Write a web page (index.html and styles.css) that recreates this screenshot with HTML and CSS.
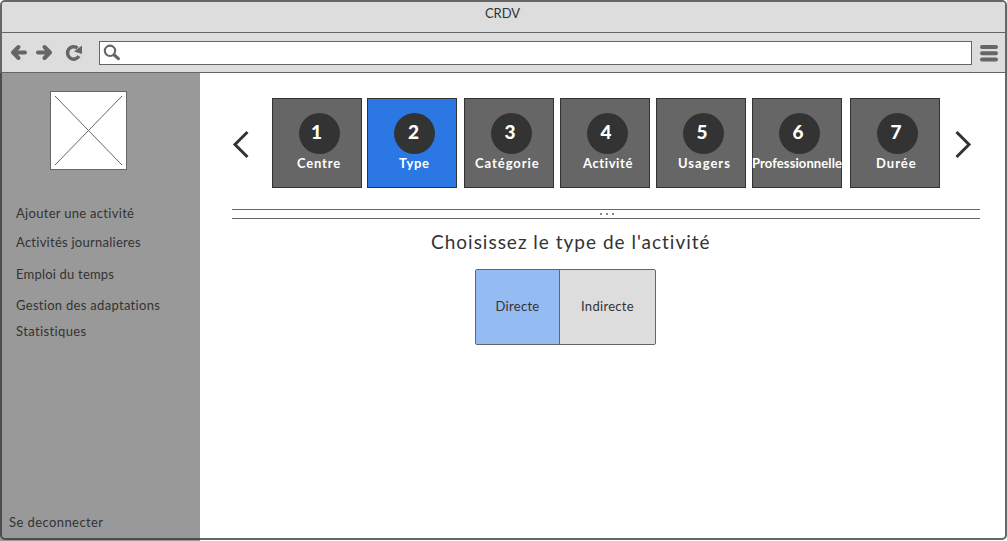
FILE: index.html
```html
<!DOCTYPE html>
<html lang="fr">
<head>
<meta charset="utf-8">
<title>CRDV</title>
<link rel="stylesheet" href="styles.css">
</head>
<body>
<div class="window">
  <header class="titlebar">CRDV</header>
  <div class="toolbar">
    <svg class="nav-icons" width="97" height="39" viewBox="2 33 97 39">
      <g fill="none" stroke="#666" stroke-linecap="round" stroke-linejoin="round" stroke-width="4">
        <path d="M25 52.500H15M18.500 47L13 52.500L18.500 58"/>
        <path d="M38 52.500H48M44.500 47L50 52.500L44.500 58"/>
      </g>
      <path d="M79 56.200A6.200 6.200 0 1 1 77.500 48" fill="none" stroke="#666" stroke-width="3.500"/>
      <path d="M82 45.500V54L74 51.500Z" fill="#666"/>
    </svg>
    <div class="address">
      <svg width="24" height="22" viewBox="100 42 24 22">
        <circle cx="110" cy="50.800" r="5.200" fill="none" stroke="#666" stroke-width="2.100"/>
        <path d="M114.500 55.200L118.400 58.600" stroke="#666" stroke-width="3.200" stroke-linecap="round"/>
      </svg>
    </div>
    <svg class="menu-icon" width="18" height="17" viewBox="0 0 18 17">
      <path d="M2 2H16M2 8.200H16M2 14.400H16" stroke="#666" stroke-width="4" stroke-linecap="round"/>
    </svg>
  </div>
  <div class="body">
    <aside class="sidebar">
      <svg class="picture" width="77" height="79" viewBox="0 0 77 79">
        <rect x=".5" y=".5" width="76" height="78" fill="#fff" stroke="#666"/>
        <path d="M5 5L72 74M72 5L5 74" stroke="#666" stroke-width="1"/>
      </svg>
      <nav class="links">
        <a class="link-add">Ajouter une activité</a>
        <a class="link-daily">Activités journalieres</a>
        <a class="link-schedule">Emploi du temps</a>
        <a class="link-adapt">Gestion des adaptations</a>
        <a class="link-stats">Statistiques</a>
      </nav>
      <a class="logout">Se deconnecter</a>
    </aside>
    <main class="main">
      <div class="stepper">
        <svg class="prev" width="18" height="30" viewBox="0 0 18 30"><path d="M15.500 3L3 15.500L15.500 28" fill="none" stroke="#333" stroke-width="3"/></svg>
        <div class="step s1"><b>1</b><span>Centre</span></div>
        <div class="step s2 active"><b>2</b><span>Type</span></div>
        <div class="step s3"><b>3</b><span>Catégorie</span></div>
        <div class="step s4"><b>4</b><span>Activité</span></div>
        <div class="step s5"><b>5</b><span>Usagers</span></div>
        <div class="step s6"><b>6</b><span>Professionnelle</span></div>
        <div class="step s7"><b>7</b><span>Durée</span></div>
        <svg class="next" width="18" height="30" viewBox="0 0 18 30"><path d="M2.500 3L15 15.500L2.500 28" fill="none" stroke="#333" stroke-width="3"/></svg>
      </div>
      <div class="splitter"><i></i><i></i><i></i></div>
      <h1 class="question">Choisissez le type de l'activité</h1>
      <div class="choices">
        <div class="choice selected">Directe</div>
        <div class="choice">Indirecte</div>
      </div>
    </main>
  </div>
</div>
</body>
</html>
```
FILE: styles.css
```css
* { box-sizing: border-box; }
body {
  margin: 0;
  height: 541px;
  overflow: hidden;
  background: #fff;
  color: #333;
  font: 13px/20px Lato, "Open Sans", sans-serif;
}
.window {
  display: flex;
  flex-direction: column;
  width: 1007px;
  height: 540px;
  border: 2px solid #666;
  border-radius: 5px;
}
.titlebar {
  height: 31px;
  padding: 1px 2px 0 0;
  border-bottom: 1px solid #666;
  border-radius: 3px 3px 0 0;
  background: #ddd;
  text-align: center;
}
.toolbar {
  display: flex;
  height: 40px;
  border-bottom: 1px solid #666;
  background: #ddd;
}
.address {
  width: 873px;
  height: 24px;
  margin-top: 8px;
  border: 1px solid #666;
  background: #fff;
}
.address svg, .nav-icons, .menu-icon { display: block; }
.menu-icon { margin: 12px 0 0 8px; }
.body { display: flex; flex: 1; min-height: 0; }
.sidebar {
  display: flex;
  flex-direction: column;
  width: 200px;
  margin: 0 0 -3px -2px;
  background: rgba(51, 51, 51, .5);
}
.picture { margin: 18px 0 0 50px; flex: none; }
.links { display: flex; flex-direction: column; align-items: flex-start; padding: 33px 0 0 16px; }
.links a { white-space: nowrap; letter-spacing: .3px; }
.links .link-daily { margin-top: 9px; letter-spacing: .26px; }
.links .link-schedule { margin-top: 12px; letter-spacing: .2px; }
.link-adapt { margin-top: 11px; }
.links .link-stats { margin-top: 6px; letter-spacing: .38px; }
.logout { margin: auto 0 9px 9px; letter-spacing: .42px; }
.main { width: 748px; margin-left: 32px; }
.stepper { display: flex; height: 115px; margin-top: 25px; }
.prev { margin: 31px 22px 0 0; flex: none; }
.next { margin: 31px 0 0 14px; flex: none; }
.step {
  display: flex;
  flex-direction: column;
  flex: none;
  width: 90px;
  height: 90px;
  padding: 14px 0 0;
  border: 1px solid #333;
  background: #666;
  color: #fff;
  font-weight: 700;
}
.step.active { background: #2b78e4; }
.step b {
  width: 41px;
  height: 41px;
  margin-left: 26px;
  padding-right: 3px;
  border-radius: 50%;
  background: #333;
  font-size: 19px;
  line-height: 37px;
  text-align: center;
}
.step span { white-space: nowrap; margin-top: -1px; letter-spacing: .8px; }
.step.s1 b { padding-right: 6px; }
.s1 span { margin-left: 24px; }
.s2 { margin-left: 5px; }
.s2 span { margin-left: 31px; letter-spacing: .7px; }
.step.s2 b { padding-right: 2px; }
.s3 { margin-left: 7px; }
.s3 span { margin-left: 10px; letter-spacing: .95px; }
.s4, .s5, .s6 { margin-left: 6px; }
.s4 span { margin-left: 22px; letter-spacing: .6px; }
.s5 span { margin-left: 21px; letter-spacing: 1px; }
.s6 span { margin-left: -1px; letter-spacing: .1px; }
.s7 { margin-left: 8px; }
.s7 span { margin-left: 25px; letter-spacing: 1px; }
.splitter {
  display: flex;
  justify-content: center;
  gap: 4px;
  height: 10px;
  margin-top: -4px;
  padding: 3px 0 0 2px;
  border: solid #666;
  border-width: 1px 0;
}
.splitter i { width: 2px; height: 2px; background: #888; }
.question {
  margin: 10px 0 0 199px;
  font-size: 19px;
  line-height: 26px;
  font-weight: 400;
  letter-spacing: 1px;
  white-space: nowrap;
}
.choices {
  display: flex;
  width: 181px;
  height: 76px;
  margin: 14px 0 0 243px;
  border: 1px solid #666;
  border-radius: 2px;
  background: #ddd;
  text-align: center;
  line-height: 72px;
  letter-spacing: .3px;
}
.choice { flex: 1; }
.choice.selected { flex: none; width: 84px; border-right: 1px solid #666; background: #94bbf2; }
```
